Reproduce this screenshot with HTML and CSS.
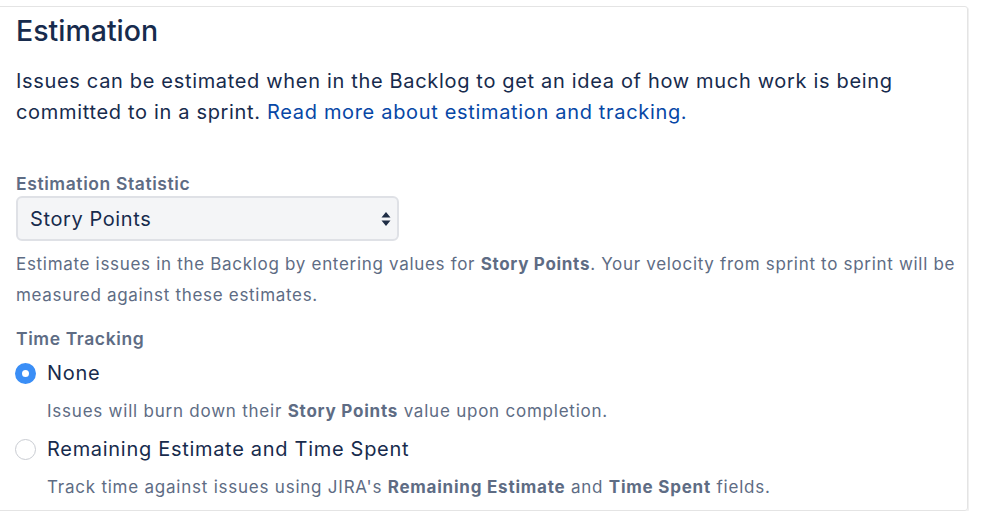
FILE: index.html
```html
<!DOCTYPE html>
<html>
<head>
<meta charset="utf-8">
<link rel="stylesheet" href="styles.css">
</head>
<body>
<div class="page">
  <section class="card">
    <h1 class="title">Estimation</h1>
    <p class="intro">Issues can be estimated when in the Backlog to get an idea of how much work is being committed to in a sprint. <a class="link" href="#">Read more about estimation and tracking.</a></p>

    <div class="field">
      <div class="label">Estimation Statistic</div>
      <div class="select">
        <span class="select-value">Story Points</span>
        <svg class="select-arrows" width="10" height="16" viewBox="0 0 10 16"><path d="M5 1 L9.5 6.5 H0.5 Z M5 15 L0.5 9.5 H9.5 Z" fill="#1f2d45"/></svg>
      </div>
      <p class="help">Estimate issues in the Backlog by entering values for <b>Story Points</b>. Your velocity from sprint to sprint will be measured against these estimates.</p>
    </div>

    <div class="field tracking">
      <div class="label">Time Tracking</div>
      <div class="option first">
        <span class="radio checked"></span>
        <span class="option-label">None</span>
      </div>
      <p class="option-help">Issues will burn down their <b>Story Points</b> value upon completion.</p>
      <div class="option">
        <span class="radio"></span>
        <span class="option-label">Remaining Estimate and Time Spent</span>
      </div>
      <p class="option-help">Track time against issues using JIRA's <b>Remaining Estimate</b> and <b>Time Spent</b> fields.</p>
    </div>
  </section>
</div>
</body>
</html>
```

FILE: styles.css
```css
html, body {
  margin: 0;
  padding: 0;
  background: #ffffff;
}
body {
  font-family: Inter, "Liberation Sans", sans-serif;
  color: #172b4d;
}
.page {
  padding-top: 6px;
  width: 987px;
  overflow: hidden;
}
.card {
  margin-left: -6px;
  width: 974px;
  box-sizing: border-box;
  border: 1px solid #e4e4e4;
  border-radius: 3px;
  box-shadow: 1px 1px 0 #f0f0f0;
  padding: 8px 0 14px 21px;
  height: 505px;
}
.title {
  margin: 0;
  font-size: 28.5px;
  font-weight: 500;
  line-height: 32px;
  color: #172b4d;
  letter-spacing: 0;
}
.intro {
  margin: 19px 0 0;
  font-size: 20px;
  line-height: 31px;
  letter-spacing: 0.67px;
  color: #172b4d;
}
.link {
  color: #0747a6;
  text-decoration: none;
}
.field {
  margin-top: 46px;
}
.label {
  font-size: 17.5px;
  font-weight: 600;
  color: #5e6c84;
  line-height: 20px;
  letter-spacing: 0.6px;
}
.select {
  margin-top: 2px;
  width: 383px;
  height: 45px;
  box-sizing: border-box;
  border: 2px solid #dfe1e6;
  border-radius: 6px;
  background: #f4f5f7;
  display: flex;
  align-items: center;
  justify-content: space-between;
  padding: 0 6px 0 12px;
}
.select-value {
  font-size: 20px;
  letter-spacing: 0.6px;
  color: #172b4d;
}
.help {
  margin: 8px 0 0;
  font-size: 17px;
  line-height: 31px;
  letter-spacing: 0.69px;
  color: #5e6c84;
}
.help b, .option-help b {
  font-weight: 700;
}
.tracking {
  margin-top: 18px;
}
.option {
  display: flex;
  align-items: center;
  height: 24px;
  margin-top: 16px;
}
.option.first {
  margin-top: 12px;
}
.radio {
  width: 21px;
  height: 21px;
  box-sizing: border-box;
  border-radius: 50%;
  border: 1.5px solid #c9ccd2;
  background: #fff;
  margin-left: -1px;
  margin-right: 11px;
  flex: none;
}
.radio.checked {
  border: 7px solid #3a8ef6;
  background: #fff;
}
.option-label {
  font-size: 20px;
  letter-spacing: 0.7px;
  color: #172b4d;
}
.option-help {
  margin: 16px 0 0 31px;
  font-size: 17px;
  line-height: 20px;
  letter-spacing: 0.77px;
  color: #5e6c84;
}
```
